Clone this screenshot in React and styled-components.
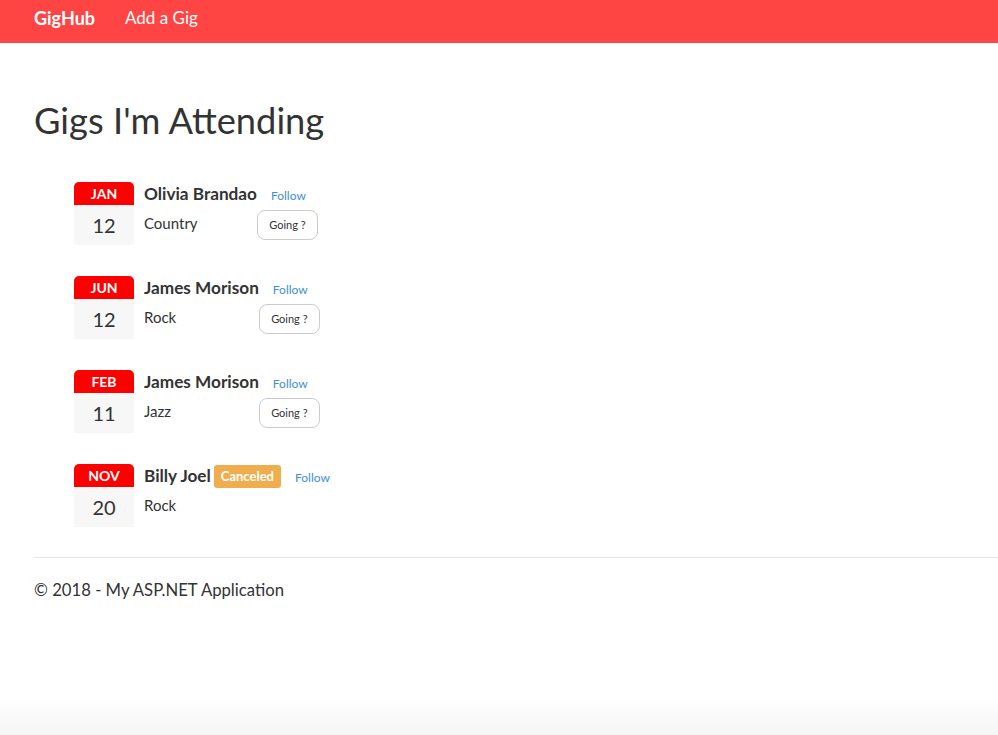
import styled, { createGlobalStyle } from 'styled-components';

const GlobalStyle = createGlobalStyle`
  html, body {
    margin: 0;
    padding: 0;
  }
  body {
    font-family: Lato, "Open Sans", sans-serif;
    color: #333;
    font-size: 15px;
    min-height: 100vh;
    background: linear-gradient(to bottom, #fff 0, #fff calc(100vh - 40px), #f5f5f5 100vh);
  }
`;

const Navbar = styled.nav`
  height: 43px;
  background: #ff4444;
  display: flex;
  align-items: center;
  padding: 0 34px;
  gap: 30px;
  color: #fff;
`;

const Brand = styled.a`
  font-weight: 700;
  font-size: 18px;
  margin-top: -8px;
`;

const NavLink = styled.a`
  font-size: 17px;
  margin-top: -8px;
`;

const Main = styled.main`
  padding: 0 0 0 34px;
`;

const Title = styled.h1`
  font-size: 36.3px;
  font-weight: 400;
  margin: 58px 0 41px;
  line-height: 1.1;
`;

const GigList = styled.ul`
  list-style: none;
  margin: 0;
  padding: 0 0 0 40px;
`;

const Gig = styled.li`
  display: flex;
  align-items: flex-start;
  gap: 10px;
  margin-bottom: 31px;
`;

const DateBox = styled.div`
  width: 60px;
  display: flex;
  flex-direction: column;
`;

const Month = styled.div`
  height: 23px;
  background: #ff0000;
  color: #fff;
  font-weight: 700;
  font-size: 14px;
  text-align: center;
  line-height: 23px;
  border-radius: 5px 5px 0 0;
`;

const Day = styled.div`
  height: 40px;
  background: #f7f7f7;
  font-size: 20px;
  text-align: center;
  line-height: 40px;
`;

const Details = styled.div`
  display: grid;
  grid-template-columns: auto auto;
  justify-content: start;
  align-items: center;
  row-gap: 4px;
`;

const Name = styled.span`
  font-weight: 700;
  font-size: 17.2px;
  line-height: 24px;
  display: flex;
  align-items: center;
`;

const Badge = styled.span`
  background: #f0ad4e;
  color: #fff;
  font-size: 13px;
  font-weight: 700;
  padding: 3px 7px;
  border-radius: 3px;
  margin-left: 3px;
  line-height: 17px;
  position: relative;
  top: 1px;
`;

const Follow = styled.a`
  color: #3d8fd1;
  font-size: 12px;
  margin-left: 14px;
  padding-top: 3px;
`;

const Genre = styled.span`
  font-size: 15px;
  align-self: start;
  padding-top: 4px;
`;

const GoingButton = styled.button`
  justify-self: start;
  font-family: inherit;
  font-size: 11px;
  color: #333;
  background: #fff;
  border: 1px solid #ccc;
  border-radius: 8px;
  width: 61px;
  height: 30px;
  padding: 0;
`;

const Footer = styled.footer`
  margin-top: -1px;
  border-top: 1px solid #e6e6e6;
  padding-top: 22px;
  font-size: 16.7px;
`;

const FooterText = styled.p`
  margin: 0;
`;

const gigs = [
  { month: 'JAN', day: 12, artist: 'Olivia Brandao', genre: 'Country' },
  { month: 'JUN', day: 12, artist: 'James Morison', genre: 'Rock' },
  { month: 'FEB', day: 11, artist: 'James Morison', genre: 'Jazz' },
  { month: 'NOV', day: 20, artist: 'Billy Joel', genre: 'Rock', canceled: true },
];

const App = () => {
  return (
    <>
      <GlobalStyle />
      <Navbar>
        <Brand>GigHub</Brand>
        <NavLink>Add a Gig</NavLink>
      </Navbar>
      <Main>
        <Title>Gigs I'm Attending</Title>
        <GigList>
          {gigs.map((gig, i) => (
            <Gig key={i}>
              <DateBox>
                <Month>{gig.month}</Month>
                <Day>{gig.day}</Day>
              </DateBox>
              <Details>
                <Name>
                  {gig.artist}
                  {gig.canceled && <Badge>Canceled</Badge>}
                </Name>
                <Follow>Follow</Follow>
                <Genre>{gig.genre}</Genre>
                {!gig.canceled ? <GoingButton>Going ?</GoingButton> : <span />}
              </Details>
            </Gig>
          ))}
        </GigList>
        <Footer>
          <FooterText>© 2018 - My ASP.NET Application</FooterText>
        </Footer>
      </Main>
    </>
  );
};

export default App;
